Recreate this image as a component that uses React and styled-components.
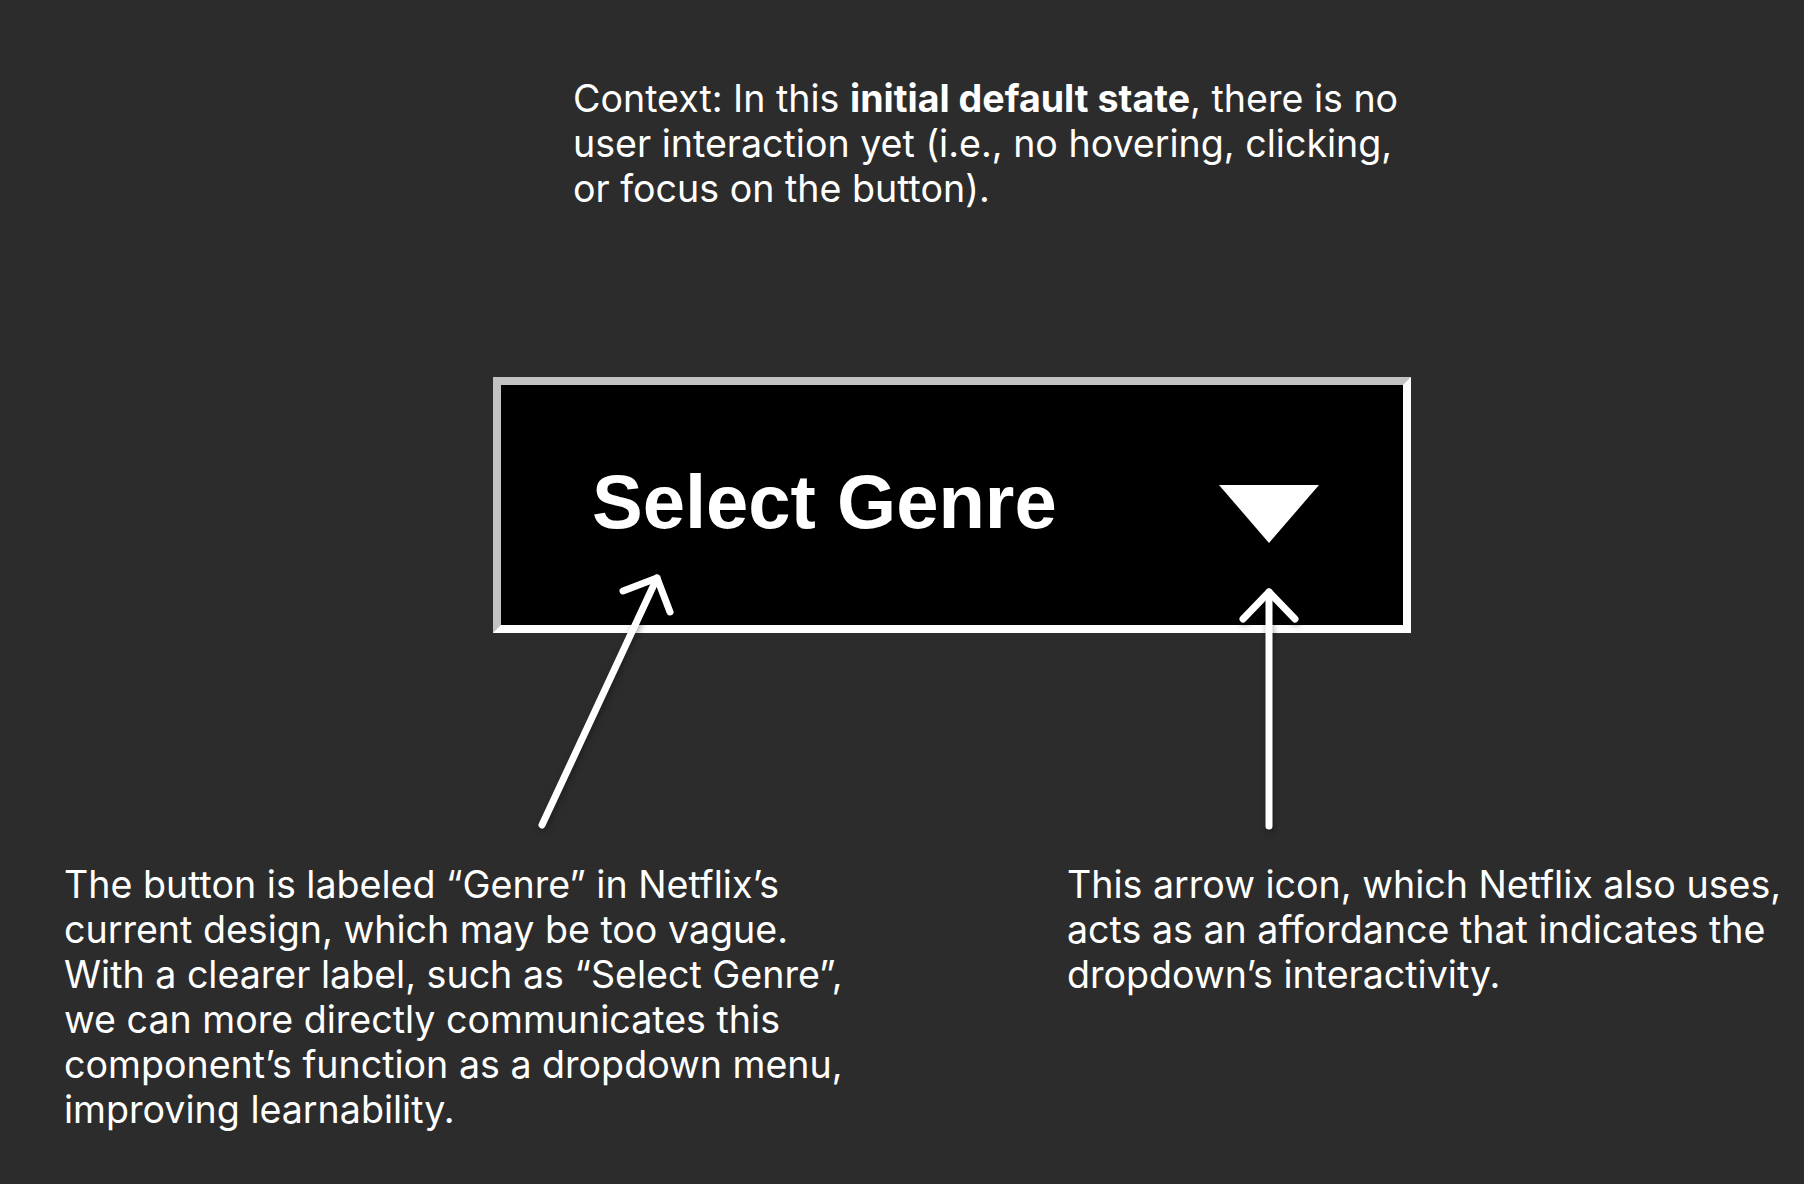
import React from "react";
import styled, { createGlobalStyle } from "styled-components";

const GlobalStyle = createGlobalStyle`
  html, body {
    margin: 0;
    padding: 0;
    background: #2c2c2c;
  }
`;

function Annotations() {
  return (
    <Overlay width="1804" height="1184" viewBox="0 0 1804 1184">
      <g
        fill="none"
        stroke="#ffffff"
        strokeWidth="7"
        strokeLinecap="round"
        strokeLinejoin="round"
      >
        <path d="M542 825 L657 578" />
        <path d="M623 591 L657 578 L670 612" />
        <path d="M1269 826 L1269 592" />
        <path d="M1243 619 L1269 592 L1295 619" />
      </g>
    </Overlay>
  );
}

export default function App() {
  return (
    <Page>
      <GlobalStyle />
      <Context>
        Context: In this <strong>initial default state</strong>, there is no
        <br />
        user interaction yet (i.e., no hovering, clicking,
        <br />
        or focus on the button).
      </Context>

      <Stage>
        <Dropdown>
          <Label>Select Genre</Label>
          <Caret />
        </Dropdown>
      </Stage>

      <Notes>
        <Note>
          The button is labeled “Genre” in Netflix’s
          <br />
          current design, which may be too vague.
          <br />
          With a clearer label, such as “Select Genre”,
          <br />
          we can more directly communicates this
          <br />
          component’s function as a dropdown menu,
          <br />
          improving learnability.
        </Note>
        <Note>
          This arrow icon, which Netflix also uses,
          <br />
          acts as an affordance that indicates the
          <br />
          dropdown’s interactivity.
        </Note>
      </Notes>

      <Annotations />
    </Page>
  );
}

const Page = styled.main`
  position: relative;
  width: 1804px;
  height: 1184px;
  overflow: hidden;
  background: #2c2c2c;
  color: #ffffff;
  font-family: Inter, "Noto Sans", sans-serif;
`;

const Text = styled.p`
  margin: 0;
  font-size: 37.6px;
  line-height: 45px;
  font-weight: 400;
  white-space: nowrap;
`;

const Context = styled(Text)`
  padding: 76px 0 0 573px;

  strong {
    font-weight: 700;
  }
`;

const Stage = styled.section`
  display: flex;
  padding: 166px 0 0 493px;
`;

const Dropdown = styled.div`
  display: flex;
  align-items: flex-start;
  justify-content: space-between;
  box-sizing: border-box;
  width: 918px;
  height: 256px;
  padding: 79px 84px 0 91px;
  background: #000000;
  border: 8px solid #ffffff;
  border-top-color: #c2c2c2;
  border-left-color: #c2c2c2;
`;

const Label = styled.span`
  font-family: "Liberation Sans", Arial, sans-serif;
  font-weight: 700;
  font-size: 76px;
  line-height: 76px;
  color: #ffffff;
`;

const Caret = styled.span`
  width: 0;
  height: 0;
  margin-top: 21px;
  border-left: 50px solid transparent;
  border-right: 50px solid transparent;
  border-top: 58px solid #ffffff;
`;

const Notes = styled.section`
  display: grid;
  grid-template-columns: 1003px 1fr;
  padding: 229px 0 0 64px;
`;

const Note = styled(Text)``;

const Overlay = styled.svg`
  position: absolute;
  inset: 0;
  pointer-events: none;
  filter: drop-shadow(1px 3px 3px rgba(0, 0, 0, 0.35));
`;
